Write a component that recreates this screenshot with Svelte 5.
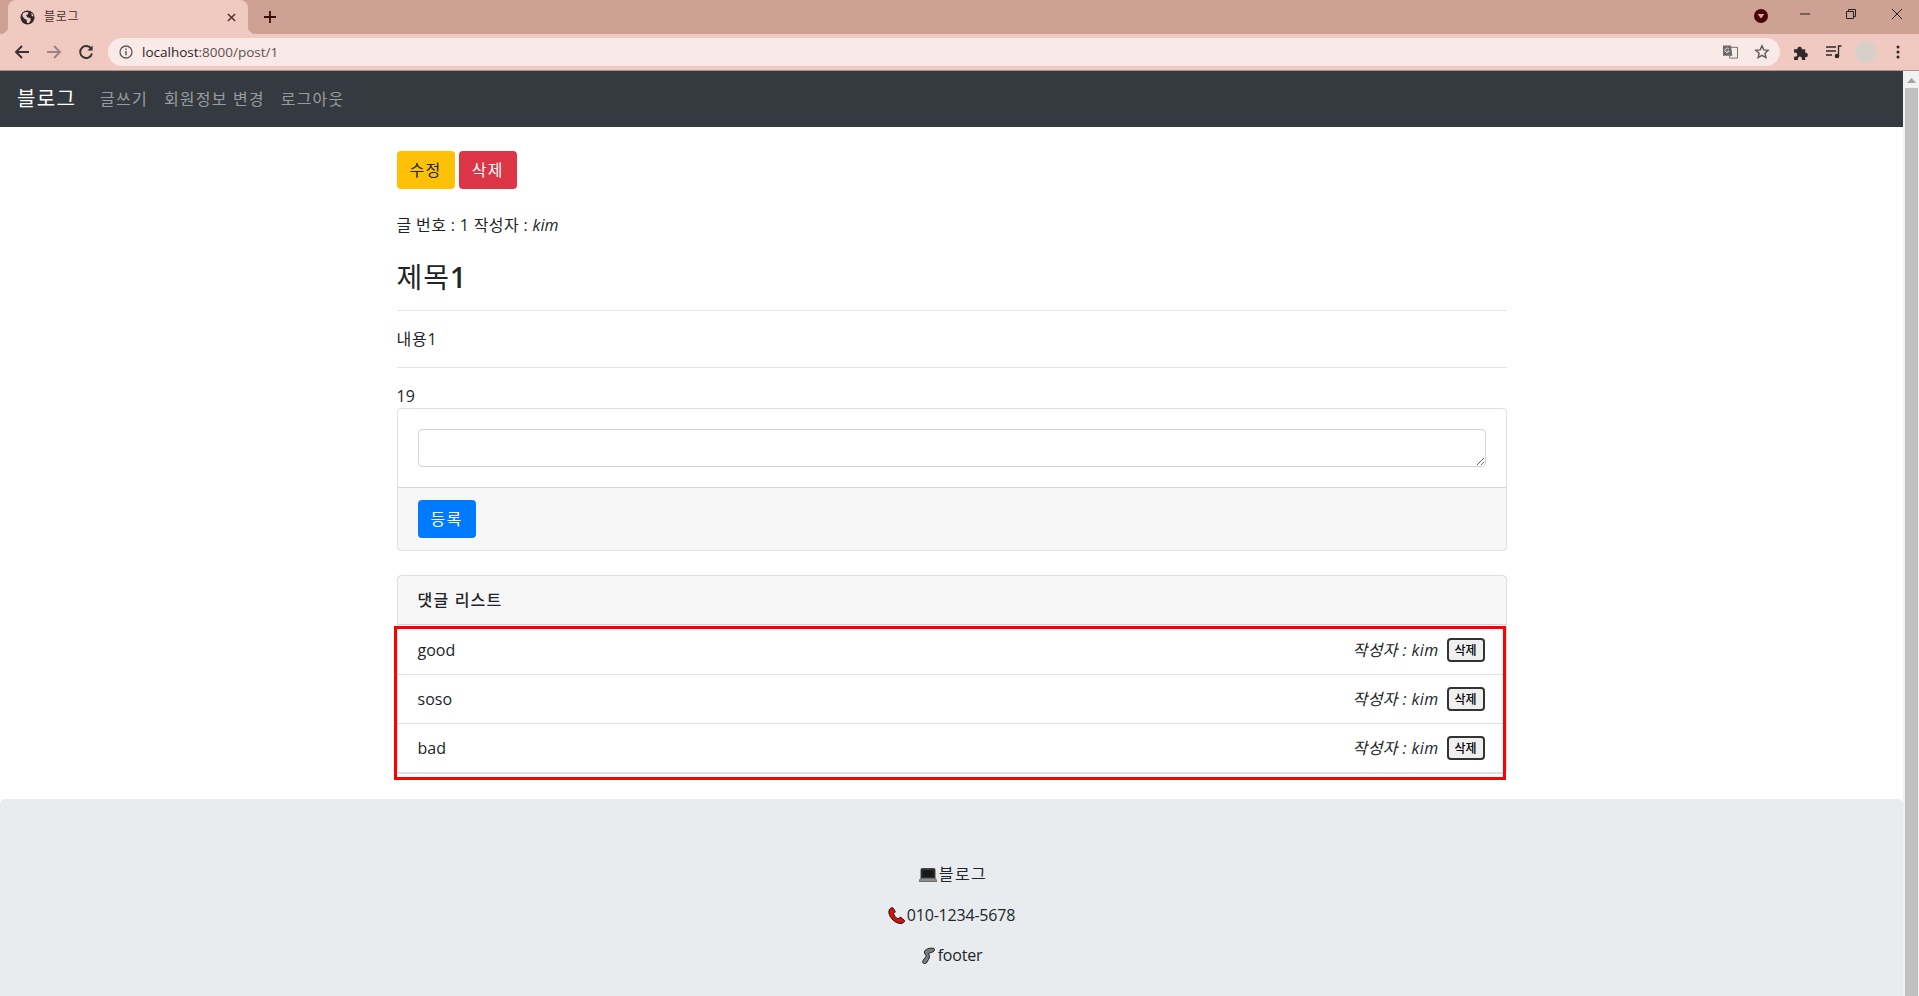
<script>
  let comments = ['good', 'soso', 'bad'];
</script>

<div class="window">
  <header class="tabstrip">
    <div class="tab">
      <svg class="globe" viewBox="0 0 16 16"><circle cx="8" cy="8" r="7.5" fill="#2f2a29"/><path d="M3 3.500l3-1.500 3 .5-.5 2-2 1 1.500 2.500 3 .5.5 2.500-2 3-2-.5-.5-3-2.500-1.500-2-2.500zM12 3l2 2 .5 2-2-.5z" fill="#f0c9c1"/></svg>
      <span class="tab-title">블로그</span>
      <svg class="tab-close" viewBox="0 0 10 10"><path d="M1 1l8 8M9 1l-8 8" stroke="#4b2f2a" stroke-width="1.600"/></svg>
    </div>
    <svg class="new-tab" viewBox="0 0 12 12"><path d="M6 0v12M0 6h12" stroke="#3d0a06" stroke-width="1.800"/></svg>
    <div class="spacer"></div>
    <svg class="media-dot" viewBox="0 0 14 14"><circle cx="7" cy="7" r="7" fill="#470606"/><path d="M3.600 5h6.800L7 9.600z" fill="#d7a99c"/></svg>
    <div class="win-btns">
      <svg viewBox="0 0 12 12"><path d="M1 6h10" stroke="#222" stroke-width="1"/></svg>
      <svg viewBox="0 0 12 12" fill="none" stroke="#222"><path d="M1.500 3.500h7v7h-7zM3.500 3.500v-2h7v7h-2"/></svg>
      <svg viewBox="0 0 12 12"><path d="M1 1l10 10M11 1L1 11" stroke="#222" stroke-width="1"/></svg>
    </div>
  </header>

  <div class="toolbar">
    <svg class="tool" viewBox="0 0 16 16"><path d="M15 8H2M8 2L2 8l6 6" fill="none" stroke="#333" stroke-width="1.900"/></svg>
    <svg class="tool" viewBox="0 0 16 16"><path d="M1 8h13M8 2l6 6-6 6" fill="none" stroke="#9b8582" stroke-width="1.900"/></svg>
    <svg class="tool" viewBox="0 0 16 16"><path d="M13.400 5A6 6 0 1 0 14 9.500" fill="none" stroke="#333" stroke-width="1.900"/><path d="M14.600 1.400v5.200H9.400z" fill="#333"/></svg>
    <div class="omnibox">
      <svg class="info" viewBox="0 0 14 14"><circle cx="7" cy="7" r="6" fill="none" stroke="#5f5a59" stroke-width="1.300"/><path d="M7 6v4.200M7 3.600v1.400" stroke="#5f5a59" stroke-width="1.400"/></svg>
      <span class="url"><span class="host">localhost</span>:8000/post/1</span>
      <div class="spacer"></div>
      <svg class="translate" viewBox="0 0 16 14"><path d="M8 2h7.500v11.500H7z" fill="#f5ecea" stroke="#6f6a69"/><path d="M0 0h8.500L10 11H0z" fill="#6f6a69"/><path d="M6.300 3.800A2.300 2.300 0 1 0 6.600 6H4.500M10.500 6h3.500M11 6c.5 2.500 1.500 4 3 5M13.500 6c-.5 2.500-1.500 4-3 5" fill="none" stroke="#eee" stroke-width=".9"/></svg>
      <svg class="star" viewBox="0 0 16 16"><path d="M8 1.800l1.800 4.100 4.400.4-3.300 2.900 1 4.400L8 11.300l-3.900 2.300 1-4.400-3.300-2.900 4.400-.4z" fill="none" stroke="#5f5a59" stroke-width="1.400"/></svg>
    </div>
    <svg class="puzzle" viewBox="0 0 16 16"><path d="M1 5h3.300a2 2 0 1 1 3.900 0h3.300v3.300a2 2 0 1 1 0 3.900v2.800H8.200a2 2 0 1 0-3.400 0H1v-3.300a2 2 0 1 0 0-3.400z" fill="#2f2a29"/></svg>
    <svg class="queue" viewBox="0 0 16 14"><path d="M0 2h10M0 6h10M0 10h6M12.500 11V1H15.500" fill="none" stroke="#2f2a29" stroke-width="1.300"/><circle cx="11" cy="11" r="2.300" fill="#2f2a29"/></svg>
    <div class="avatar"></div>
    <svg class="dots" viewBox="0 0 4 14"><circle cx="2" cy="2" r="1.500"/><circle cx="2" cy="7" r="1.500"/><circle cx="2" cy="12" r="1.500"/></svg>
  </div>

  <div class="viewport">
    <div class="page">
      <nav class="navbar">
        <a class="brand" href="#top">블로그</a>
        <a class="nav-link" href="#top">글쓰기</a>
        <a class="nav-link" href="#top">회원정보 변경</a>
        <a class="nav-link" href="#top">로그아웃</a>
      </nav>

      <main class="container">
        <div class="actions">
          <button class="btn warning">수정</button>
          <button class="btn danger">삭제</button>
        </div>
        <p class="meta">글 번호 : 1 작성자 : <i>kim</i></p>
        <h3 class="title">제목<span class="num">1</span></h3>
        <hr />
        <div class="content">내용1</div>
        <hr />
        <div class="count">19</div>

        <form class="card">
          <div class="card-body"><textarea rows="1"></textarea></div>
          <div class="card-footer"><button type="button" class="btn primary">등록</button></div>
        </form>

        <section class="card replies">
          <div class="card-header">댓글 리스트</div>
          <div class="list">
            {#each comments as comment}
              <div class="row">
                <span>{comment}</span>
                <div class="row-right">
                  <i>작성자 : kim</i>
                  <button class="mini">삭제</button>
                </div>
              </div>
            {/each}
            <div class="highlight"></div>
          </div>
        </section>
      </main>

      <footer class="footer">
        <p>
          <svg class="emoji" viewBox="0 0 18 14"><path d="M3 .6h12a1 1 0 0 1 1 1V10H2V1.600a1 1 0 0 1 1-1z" fill="#3a3a3a" stroke="#222" stroke-width=".8"/><rect x="3.300" y="2" width="11.400" height="7" fill="#17171a"/><path d="M2 10h14l2 2.500a.8.8 0 0 1-.6 1.200H.6a.8.8 0 0 1-.6-1.200z" fill="#8c8c8c" stroke="#333" stroke-width=".6"/></svg><span class="ko">블로그</span>
        </p>
        <p>
          <svg class="emoji phone" viewBox="0 0 17 17"><path d="M3 1C1 2 0 5 2 9c2 4 6 7 10 7.500 3 0 5-1.500 4.500-3L13 10.500c-1-.5-2 .5-3 1.500-2-1-4-3.500-4.500-5.500C7 5.500 7.500 5 7 4L5 1c-.5-.5-1.500-.5-2 0z" fill="#d0140c" stroke="#1c1010"/></svg>010-1234-5678
        </p>
        <p>
          <svg class="emoji leg" viewBox="0 0 14 18"><path d="M13 1.500C10 .5 6 1.500 4 3.500c-1.500 1.500 0 3.500 1 5 .5 1.500-2 3-3 5-1 2 .5 3.500 2.500 3 1.500-.5 1.500-2 3-4 1.500-2 1-4 0-6 1.500-1 4.500-1 5.500-2.500.7-1 .7-2 0-2.500z" fill="#7c7c7c" stroke="#222"/></svg>footer
        </p>
      </footer>
    </div>

    <aside class="scrollbar">
      <svg class="arrow" viewBox="0 0 9 5"><path d="M4.500 0L9 5H0z" fill="#a3a3a3"/></svg>
      <div class="thumb"></div>
    </aside>
  </div>
</div>

<style>
  :global(body) {
    margin: 0;
    background: #fff;
    overflow: hidden;
  }

  .window {
    display: flex;
    flex-direction: column;
    height: 996px;
    overflow: hidden;
    font-family: "Open Sans", "Noto Sans CJK KR", sans-serif;
    font-size: 16px;
    line-height: 24px;
    color: #212529;
  }

  .spacer {
    flex: 1;
  }

  /* browser chrome */
  .tabstrip {
    display: flex;
    align-items: center;
    height: 34px;
    padding-left: 8px;
    background: #cea195;
  }

  .tab {
    position: relative;
    display: flex;
    align-items: center;
    box-sizing: border-box;
    width: 240px;
    height: 34px;
    padding: 0 12px;
    background: #f0c9c1;
    border-radius: 8px 8px 0 0;
  }

  .tab::before,
  .tab::after {
    content: "";
    position: absolute;
    bottom: 0;
    width: 8px;
    height: 8px;
  }

  .tab::before {
    left: -8px;
    background: radial-gradient(circle at 0 0, transparent 8px, #f0c9c1 8.5px);
  }

  .tab::after {
    right: -8px;
    background: radial-gradient(circle at 100% 0, transparent 8px, #f0c9c1 8.5px);
  }

  .globe {
    width: 15px;
    height: 15px;
  }

  .tab-title {
    flex: 1;
    margin: -1px 0 0 9px;
    font-size: 12px;
    letter-spacing: 0.7px;
    color: #45302b;
  }

  .tab-close {
    width: 9px;
    height: 9px;
    margin-right: 0;
  }

  .new-tab {
    width: 12px;
    height: 12px;
    margin-left: 16px;
  }

  .media-dot {
    width: 14px;
    height: 14px;
    margin: -2px 31px 0 0;
  }

  .win-btns {
    display: flex;
    align-self: flex-start;
    gap: 34px;
    margin: 8px 16px 0 0;
  }

  .win-btns svg {
    width: 12px;
    height: 12px;
  }

  .toolbar {
    display: flex;
    align-items: center;
    height: 36px;
    padding-left: 14px;
    background: #f0c9c1;
    border-bottom: 1px solid #b0908a;
  }

  .tool {
    width: 16px;
    height: 16px;
    margin-right: 16px;
  }

  .omnibox {
    display: flex;
    align-items: center;
    box-sizing: border-box;
    width: 1672px;
    height: 28px;
    margin-left: -2px;
    padding: 0 10px 0 11px;
    background: #f9e9e7;
    border-radius: 14px;
  }

  .info {
    width: 14px;
    height: 14px;
  }

  .url {
    margin-left: 9px;
    font-family: "Open Sans", sans-serif;
    font-size: 13.5px;
    color: #5e5352;
  }

  .host {
    color: #2c2523;
  }

  .translate {
    width: 15px;
    height: 14px;
    margin-right: 16px;
  }

  .star {
    width: 16px;
    height: 16px;
  }

  .puzzle {
    width: 17px;
    height: 17px;
    margin-left: 13px;
  }

  .queue {
    width: 16px;
    height: 14px;
    margin-left: 16px;
  }

  .avatar {
    width: 22px;
    height: 22px;
    margin-left: 13px;
    border-radius: 50%;
    background: #d9cfc9;
  }

  .dots {
    width: 4px;
    height: 14px;
    margin-left: 19px;
    fill: #2f2a29;
  }

  /* page */
  .viewport {
    flex: 1;
    display: flex;
    min-height: 0;
  }

  .page {
    flex: 1;
    display: flex;
    flex-direction: column;
    min-width: 0;
  }

  .scrollbar {
    display: flex;
    flex-direction: column;
    align-items: center;
    width: 16px;
    background: #f1f1f1;
  }

  .arrow {
    width: 9px;
    height: 5px;
    margin: 7px 0 5px;
  }

  .thumb {
    flex: 1;
    width: 13px;
    margin-left: 1px;
    background: #c1c1c1;
  }

  .navbar {
    display: flex;
    align-items: center;
    flex: none;
    box-sizing: border-box;
    height: 56px;
    padding: 0 16px 0 17px;
    background: #343a40;
  }

  .navbar a {
    text-decoration: none;
  }

  .brand {
    margin-right: 16px;
    font-size: 20px;
    letter-spacing: 1.3px;
    color: #fff;
  }

  .nav-link {
    padding: 0 8px;
    letter-spacing: 1.2px;
    color: rgba(255, 255, 255, 0.5);
  }

  .container {
    flex: none;
    box-sizing: border-box;
    width: 1110px;
    margin: 24px auto 0;
  }

  .actions {
    display: flex;
    gap: 4px;
  }

  .btn {
    height: 38px;
    padding: 0 12px;
    border: 1px solid transparent;
    border-radius: 4px;
    font: inherit;
    letter-spacing: 1.4px;
  }

  .warning {
    background: #ffc107;
    color: #212529;
  }

  .danger {
    background: #dc3545;
    color: #fff;
  }

  .primary {
    background: #007bff;
    color: #fff;
  }

  .meta {
    margin: 24px 0 23px;
    letter-spacing: 0.35px;
  }

  .meta i {
    letter-spacing: 0;
  }

  .title {
    margin: 0 0 8px;
    font-size: 28px;
    line-height: 34px;
    font-weight: 400;
    letter-spacing: 1px;
  }

  .num {
    font-weight: 600;
  }

  hr {
    height: 1px;
    margin: 16px 0;
    border: 0;
    background: rgba(0, 0, 0, 0.1);
  }

  .content {
    letter-spacing: 0.8px;
  }

  .card {
    border: 1px solid rgba(0, 0, 0, 0.125);
    border-radius: 4px;
  }

  .card-body {
    padding: 20px;
  }

  textarea {
    display: block;
    box-sizing: border-box;
    width: 100%;
    height: 38px;
    padding: 6px 12px;
    border: 1px solid #ced4da;
    border-radius: 4px;
    font: inherit;
  }

  .card-footer {
    padding: 12px 20px;
    background: rgba(0, 0, 0, 0.03);
    border-top: 1px solid rgba(0, 0, 0, 0.125);
  }

  .replies {
    margin-top: 24px;
  }

  .card-header {
    padding: 12px 20px;
    background: rgba(0, 0, 0, 0.03);
    border-bottom: 1px solid rgba(0, 0, 0, 0.125);
    font-weight: 500;
    letter-spacing: 1.2px;
  }

  .list {
    position: relative;
    padding-top: 1px;
  }

  .row {
    display: flex;
    align-items: center;
    justify-content: space-between;
    height: 48px;
    padding: 0 21px 0 20px;
    border-bottom: 1px solid rgba(0, 0, 0, 0.125);
  }

  .row-right {
    display: flex;
    align-items: center;
    gap: 8px;
    letter-spacing: 0.4px;
  }

  .mini {
    width: 38px;
    height: 24px;
    padding: 0;
    border: 2px solid #333;
    border-radius: 4px;
    background: #efefef;
    color: #000;
    font: 500 12px/1 "Noto Sans CJK KR", sans-serif;
  }

  .highlight {
    position: absolute;
    inset: 1px 0 -7px -4px;
    border: 3px solid #f00;
    pointer-events: none;
  }

  .footer {
    flex: 1;
    margin-top: 25px;
    padding: 63px 0 0;
    background: #e9ecef;
    border-radius: 5px 5px 0 0;
    text-align: center;
    letter-spacing: -0.2px;
  }

  .footer p {
    margin: 0 0 16.500px;
  }

  .ko {
    letter-spacing: 1.4px;
  }

  .emoji {
    width: 18px;
    height: 14px;
    margin-right: 2px;
    margin-left: 3px;
    vertical-align: -2px;
  }

  .phone {
    width: 17px;
    height: 17px;
    margin-left: 0;
    margin-right: 2px;
    vertical-align: -3px;
  }

  .leg {
    width: 14px;
    height: 18px;
    margin-left: 0;
    margin-right: 3px;
    vertical-align: -4px;
  }
</style>
